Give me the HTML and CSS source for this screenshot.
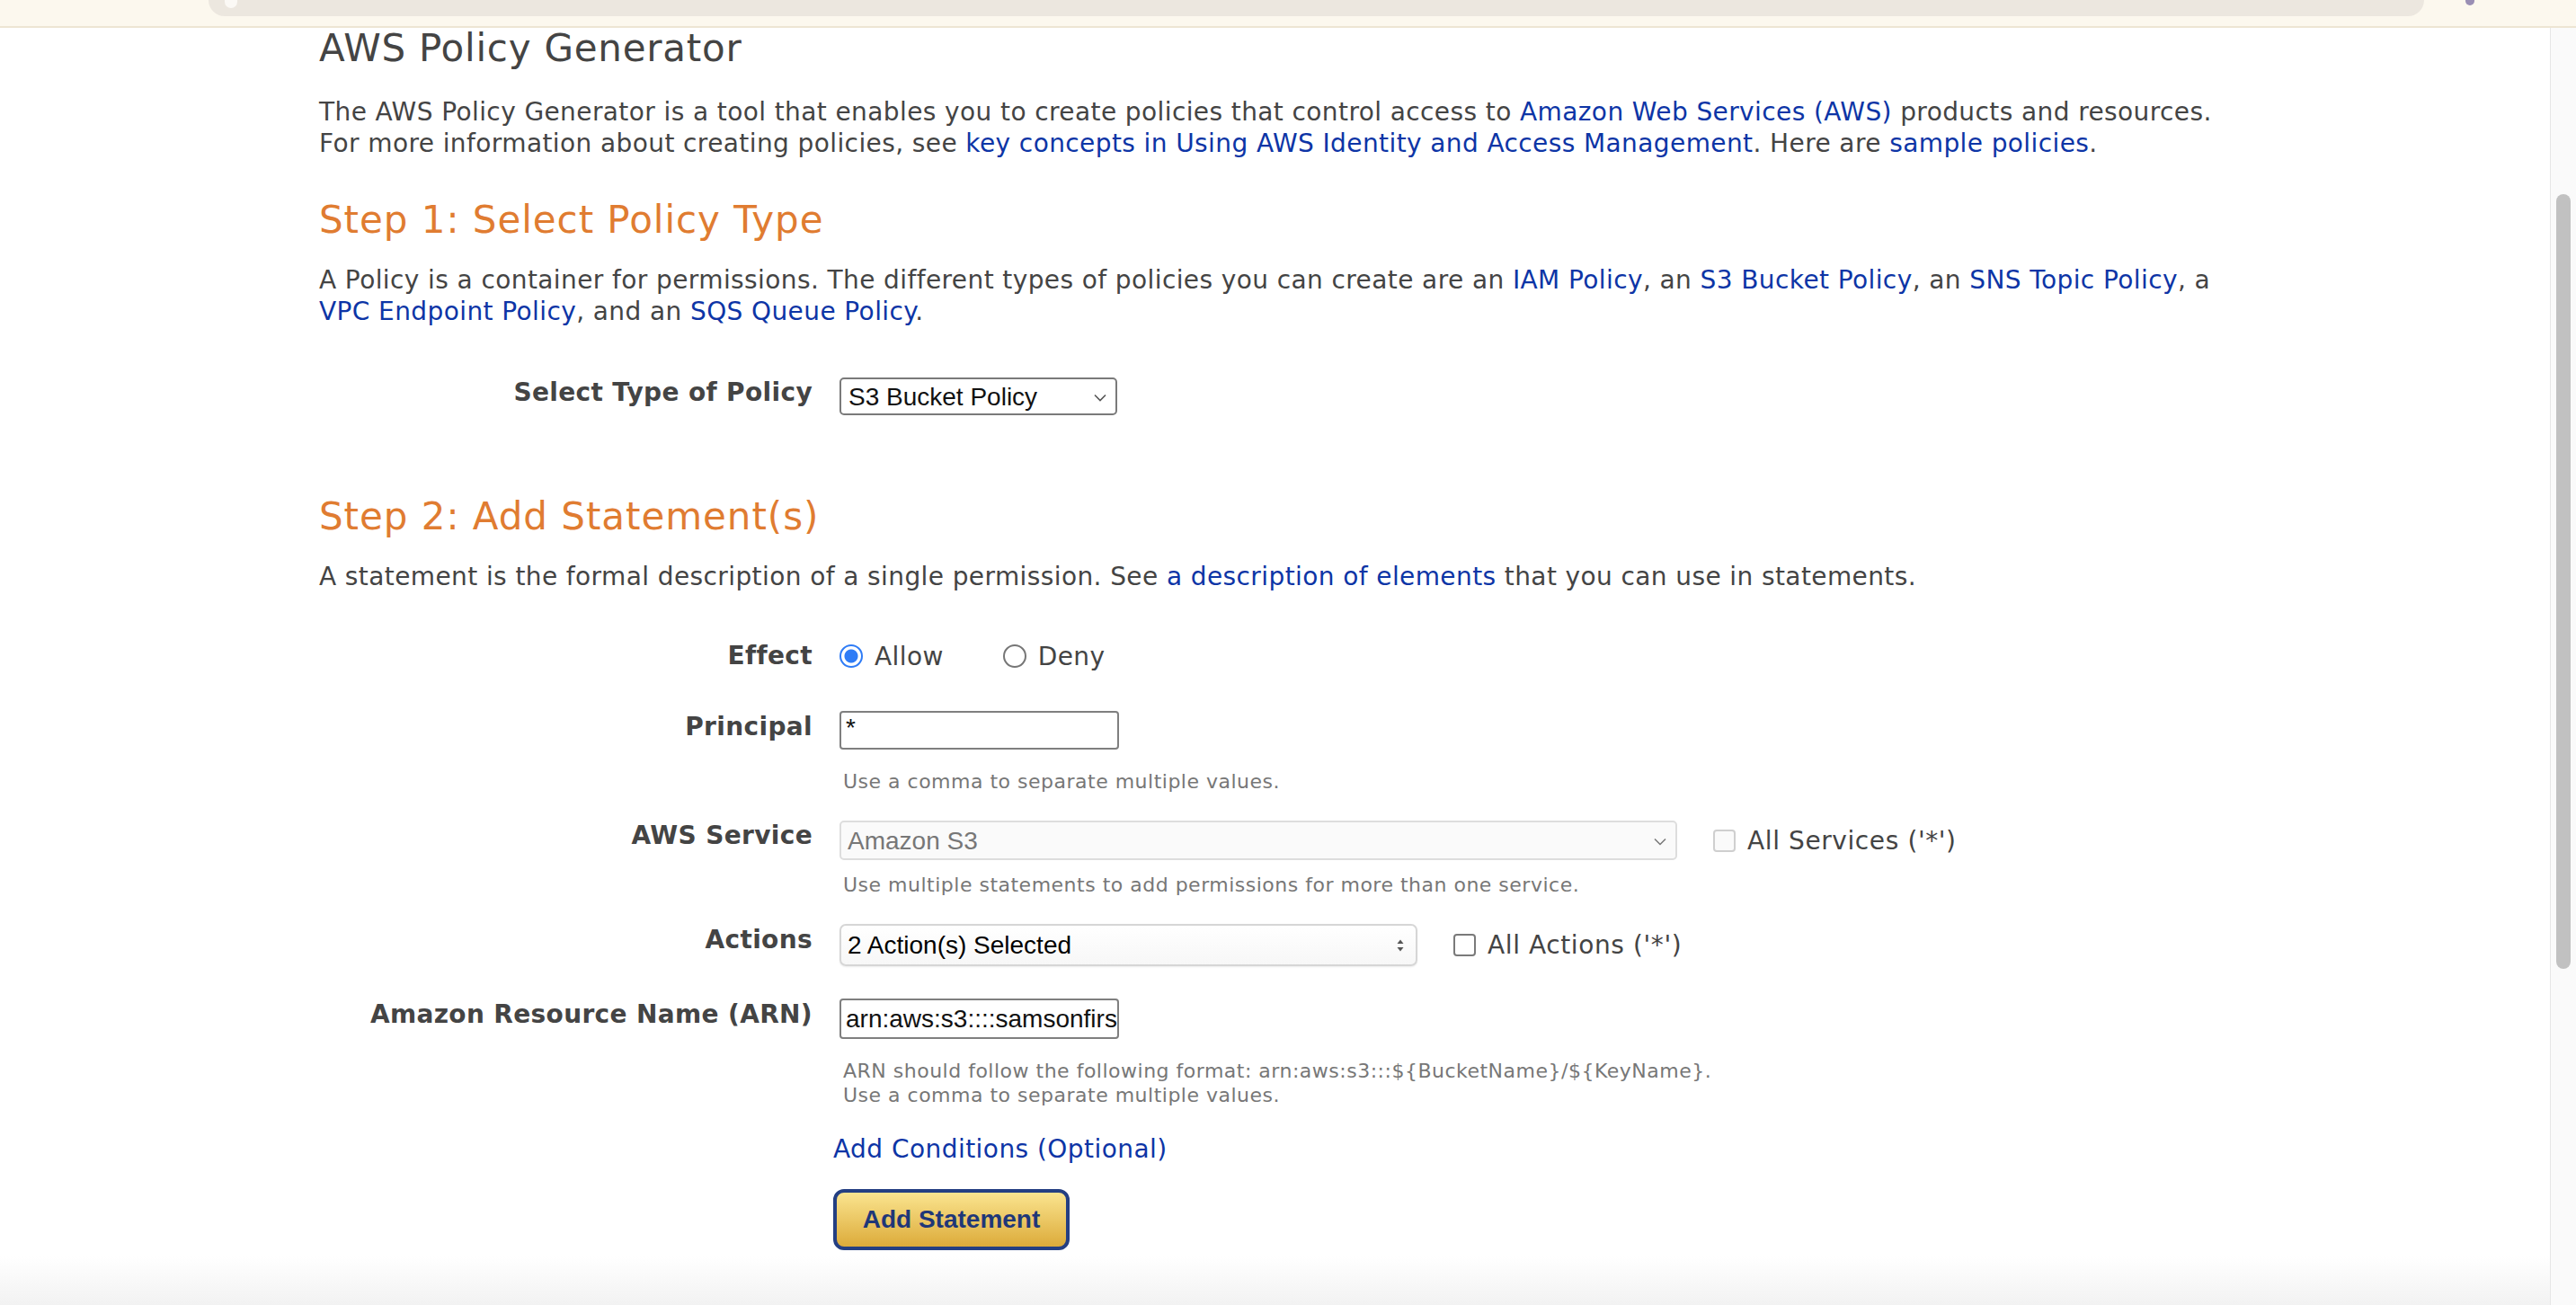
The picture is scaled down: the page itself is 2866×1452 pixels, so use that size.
FILE: index.html
```html
<!DOCTYPE html>
<html lang="en">
<head>
<meta charset="utf-8">
<title>AWS Policy Generator</title>
<link rel="stylesheet" href="styles.css">
</head>
<body>
<div class="chrome">
  <div class="pill"><span class="pill-dot"></span></div>
  <span class="ext"></span>
</div>
<div class="viewport">
  <main class="page">
    <div class="content">
      <h1 class="title">AWS Policy Generator</h1>
      <p class="text intro">The AWS Policy Generator is a tool that enables you to create policies that control access to <a href="#">Amazon Web Services (AWS)</a> products and resources. For more information about creating policies, see <a href="#">key concepts in Using AWS Identity and Access Management</a>. Here are <a href="#">sample policies</a>.</p>

      <h2 class="step step1">Step 1: Select Policy Type</h2>
      <p class="text step-desc">A Policy is a container for permissions. The different types of policies you can create are an <a href="#">IAM Policy</a>, an <a href="#">S3 Bucket Policy</a>, an <a href="#">SNS Topic Policy</a>, a <a href="#">VPC Endpoint Policy</a>, and an <a href="#">SQS Queue Policy</a>.</p>

      <div class="row row-type">
        <div class="lbl">Select Type of Policy</div>
        <div class="ctl">
          <div class="select select-type"><span class="sel-text">S3 Bucket Policy</span>
            <svg class="chev" width="14" height="9" viewBox="0 0 14 9"><polyline points="1,1.5 7,7.5 13,1.5" fill="none" stroke="#555" stroke-width="1.6"/></svg>
          </div>
        </div>
      </div>

      <h2 class="step step2">Step 2: Add Statement(s)</h2>
      <p class="text step-desc">A statement is the formal description of a single permission. See <a href="#">a description of elements</a> that you can use in statements.</p>

      <div class="row row-effect">
        <div class="lbl">Effect</div>
        <div class="ctl radios">
          <span class="radio checked"></span><span class="opt">Allow</span>
          <span class="radio radio-deny"></span><span class="opt">Deny</span>
        </div>
      </div>

      <div class="row row-principal">
        <div class="lbl">Principal</div>
        <div class="ctl">
          <div class="input input-principal"><span class="in-text">*</span></div>
        </div>
      </div>
      <div class="hint hint1">Use a comma to separate multiple values.</div>

      <div class="row row-service">
        <div class="lbl">AWS Service</div>
        <div class="ctl ctl-inline">
          <div class="select select-service"><span class="sel-text">Amazon S3</span>
            <svg class="chev" width="14" height="9" viewBox="0 0 14 9"><polyline points="1,1.5 7,7.5 13,1.5" fill="none" stroke="#777" stroke-width="1.5"/></svg>
          </div>
          <span class="check disabled"></span><span class="check-label">All Services ('*')</span>
        </div>
      </div>
      <div class="hint hint2">Use multiple statements to add permissions for more than one service.</div>

      <div class="row row-actions">
        <div class="lbl">Actions</div>
        <div class="ctl ctl-inline">
          <div class="select select-actions"><span class="sel-text">2 Action(s) Selected</span>
            <svg class="updown" width="10" height="16" viewBox="0 0 10 16"><polygon points="5,1.5 8.5,6 1.5,6" fill="#555"/><polygon points="5,14.5 8.5,10 1.5,10" fill="#555"/></svg>
          </div>
          <span class="check"></span><span class="check-label">All Actions ('*')</span>
        </div>
      </div>

      <div class="row row-arn">
        <div class="lbl">Amazon Resource Name (ARN)</div>
        <div class="ctl">
          <div class="input input-arn"><span class="in-text">arn:aws:s3::::samsonfirstbucket/*</span></div>
        </div>
      </div>
      <div class="hint hint3">ARN should follow the following format: arn:aws:s3:::${BucketName}/${KeyName}.<br>Use a comma to separate multiple values.</div>

      <div class="cond"><a href="#">Add Conditions (Optional)</a></div>
      <div class="btn-wrap"><span class="btn">Add Statement</span></div>
    </div>
    <div class="fade"></div>
  </main>
  <div class="scrollbar"><div class="thumb"></div></div>
</div>
</body>
</html>
```

FILE: styles.css
```css
html, body {
  margin: 0;
  padding: 0;
  background: #ffffff;
}
body {
  width: 2866px;
  height: 1452px;
  overflow: hidden;
  font-family: "DejaVu Sans", Verdana, sans-serif;
  color: #444444;
}
a {
  color: #0d35a6;
  text-decoration: none;
}

/* browser chrome strip */
.chrome {
  height: 29px;
  background: #fcf8ee;
  border-bottom: 2px solid #ede5d3;
  display: flex;
  align-items: flex-start;
}
.pill {
  margin-left: 232px;
  width: 2465px;
  height: 18px;
  background: #ece7df;
  border-radius: 0 0 20px 20px;
  display: flex;
}
.pill-dot {
  width: 14px;
  height: 9px;
  margin-left: 18px;
  background: #fbf9f5;
  border-radius: 0 0 7px 7px;
}
.ext {
  width: 10px;
  height: 6px;
  margin-left: 46px;
  background: #9a8fb4;
  border-radius: 0 0 5px 5px;
}

.viewport {
  display: flex;
  height: 1421px;
}
.page {
  flex: 1;
  display: flex;
  flex-direction: column;
}
.content {
  width: 2127px;
  margin-left: 355px;
}
.fade {
  margin-top: auto;
  height: 54px;
  background: linear-gradient(#ffffff, #f2f2f2);
}

.scrollbar {
  width: 28px;
  background: #fafafa;
  border-left: 1px solid #e6e6e6;
}
.thumb {
  width: 16px;
  height: 862px;
  margin-top: 185px;
  margin-left: 6px;
  background: #c1c1c1;
  border-radius: 8px;
}

/* headings and text */
.title {
  margin: 2px 0 0 0;
  font-size: 42px;
  line-height: 42px;
  font-weight: normal;
  letter-spacing: 0.75px;
  color: #444444;
}
.text {
  margin: 0;
  font-size: 28px;
  line-height: 35px;
  letter-spacing: 0.4px;
}
.intro {
  margin-top: 32px;
}
.step {
  margin: 0;
  font-size: 42px;
  line-height: 42px;
  font-weight: normal;
  letter-spacing: 0.95px;
  color: #e07c31;
}
.step1 {
  margin-top: 47px;
}
.step2 {
  margin-top: 92px;
}
.step-desc {
  margin-top: 28px;
}

/* form rows */
.row {
  display: grid;
  grid-template-columns: 549px 1fr;
  column-gap: 30px;
  align-items: start;
}
.lbl {
  text-align: right;
  font-weight: bold;
  font-size: 28px;
  line-height: 34px;
  letter-spacing: 0.35px;
  color: #444444;
}
.ctl {
  display: flex;
  align-items: center;
}
.row-type {
  margin-top: 56px;
}
.row-effect {
  margin-top: 54px;
}
.row-principal {
  margin-top: 44px;
}
.row-principal .lbl {
  margin-top: 1px;
}
.row-service {
  margin-top: 30px;
}
.row-actions {
  margin-top: 30px;
}
.row-actions .lbl {
  margin-top: 1px;
}
.row-arn {
  margin-top: 36px;
}
.row-arn .lbl {
  margin-top: 1px;
}

.select {
  box-sizing: border-box;
  display: flex;
  align-items: center;
  font-family: "Liberation Sans", Arial, sans-serif;
  font-size: 28px;
  color: #111111;
  white-space: nowrap;
}
.sel-text {
  flex: 1;
}
.select-type {
  width: 309px;
  height: 42px;
  border: 2px solid #7a7a7a;
  border-radius: 5px;
  padding: 2px 10px 0 8px;
}
.select-service {
  width: 932px;
  height: 44px;
  border: 2px solid #dddddd;
  border-radius: 5px;
  background: #fafafa;
  color: #777777;
  padding: 2px 10px 0 7px;
}
.select-actions {
  width: 643px;
  height: 47px;
  border: 2px solid #d6d6d6;
  border-radius: 7px;
  background: linear-gradient(#ffffff, #f7f7f7);
  box-shadow: 0 1px 2px rgba(0,0,0,0.08);
  padding: 0 10px 0 7px;
  color: #000000;
}
.updown {
  margin-right: 2px;
}

.input {
  box-sizing: border-box;
  width: 311px;
  border: 2px solid #7f7f7f;
  border-radius: 4px;
  display: flex;
  align-items: center;
  overflow: hidden;
  font-family: "Liberation Sans", Arial, sans-serif;
  font-size: 28px;
  color: #111111;
  white-space: nowrap;
  padding-left: 5px;
}
.input-principal {
  height: 43px;
  align-items: flex-start;
  padding-top: 1px;
}
.input-arn {
  height: 45px;
}

/* radios */
.radios {
  height: 34px;
  font-size: 28px;
  letter-spacing: 0.4px;
}
.radio {
  box-sizing: border-box;
  width: 26px;
  height: 26px;
  border-radius: 50%;
  border: 2px solid #767676;
  display: inline-block;
  flex: none;
}
.radio.checked {
  border-color: #2f7cf6;
  background: radial-gradient(circle, #2f7cf6 0 7px, #ffffff 8px);
}
.radio-deny {
  margin-left: 66px;
}
.opt {
  margin-left: 13px;
  color: #444444;
}

/* checkboxes */
.ctl-inline .select {
  flex: none;
}
.check {
  box-sizing: border-box;
  width: 25px;
  height: 25px;
  border: 2px solid #7a7a7a;
  border-radius: 4px;
  background: #ffffff;
  flex: none;
  margin-left: 40px;
}
.check.disabled {
  border-color: #cfcfcf;
  background: #fafafa;
}
.check-label {
  margin-left: 13px;
  font-size: 28px;
  letter-spacing: 0.6px;
  color: #444444;
}

/* hints */
.hint {
  margin-left: 583px;
  font-size: 22px;
  line-height: 27px;
  letter-spacing: 0.5px;
  color: #777777;
}
.hint1 {
  margin-top: 22px;
}
.hint2 {
  margin-top: 14px;
}
.hint3 {
  margin-top: 22px;
}

.cond {
  margin-top: 30px;
  margin-left: 572px;
  font-size: 28px;
  line-height: 34px;
  letter-spacing: 0.45px;
}
.btn-wrap {
  margin-top: 27px;
  margin-left: 572px;
  display: flex;
}
.btn {
  box-sizing: border-box;
  width: 263px;
  height: 68px;
  border: 4px solid #243f82;
  border-radius: 12px;
  background: linear-gradient(#fae48f, #dcab3a);
  display: flex;
  align-items: center;
  justify-content: center;
  font-family: "Liberation Sans", Arial, sans-serif;
  font-weight: bold;
  font-size: 28px;
  color: #1f3778;
}
```
